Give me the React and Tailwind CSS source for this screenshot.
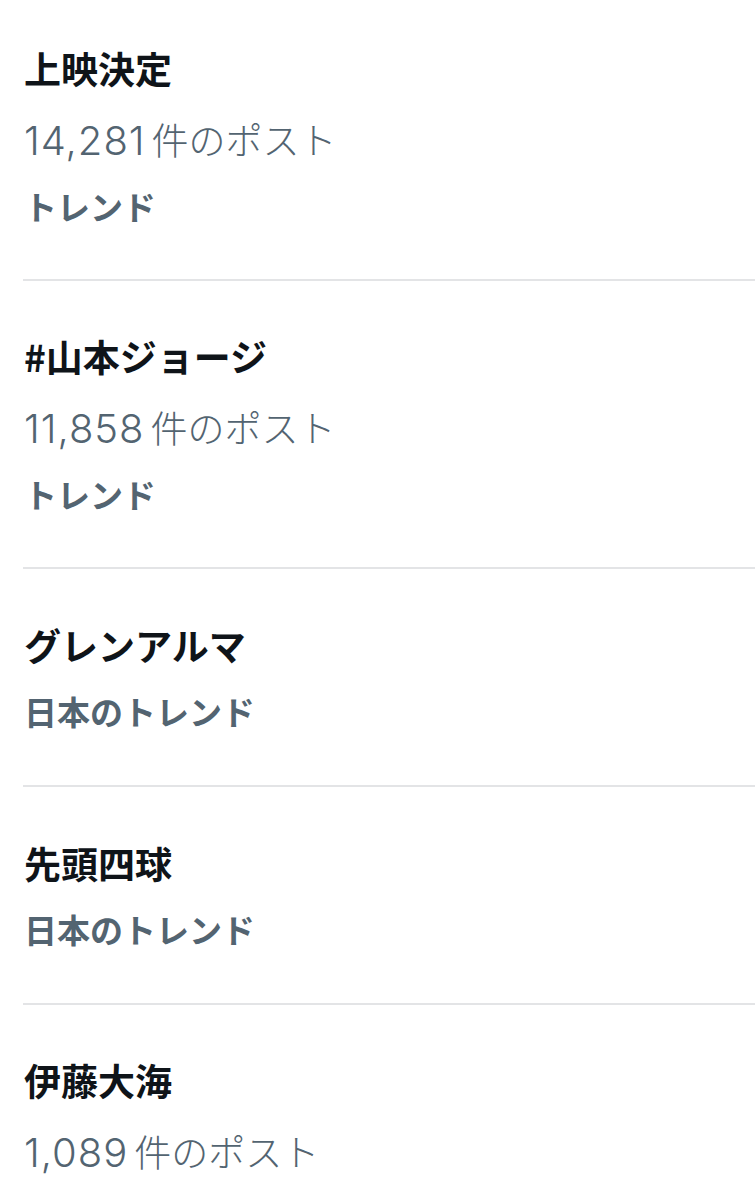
import React from "react";

const items = [
  { title: "上映決定", count: "14,281", trend: "トレンド" },
  { title: "#山本ジョージ", count: "11,858", trend: "トレンド" },
  { title: "グレンアルマ", trend: "日本のトレンド" },
  { title: "先頭四球", trend: "日本のトレンド" },
  { title: "伊藤大海", count: "1,089" },
];

export default function App() {
  return (
    <div
      className="w-[755px] h-[1200px] overflow-hidden bg-white"
      style={{ fontFamily: '"Noto Sans CJK JP", "Noto Sans", sans-serif' }}
    >
      {items.map((it, i) => {
        const pad =
          i === 0
            ? "pt-[34px] pb-[39px]"
            : it.count
            ? "pt-[41px] pb-[39px]"
            : "pt-[42px] pb-[40px]";
        return (
          <div key={i}>
            {i > 0 && <div className="ml-[23px] h-[2px] bg-[#e3e4e6]" />}
            <div className={"pl-[24px] flex flex-col " + pad}>
              <div className="h-[68px] leading-[68px] text-[37px] font-bold text-[#0f1419]">
                {it.title}
              </div>
              {it.count && (
                <div className="mt-[3px] h-[68px] leading-[68px] text-[37px] font-light text-[#536471] whitespace-nowrap">
                  <span className="font-[Inter,sans-serif] text-[40px] tracking-[1px]">
                    {it.count}
                  </span>
                  <span className="ml-[6px]">件のポスト</span>
                </div>
              )}
              {it.trend && (
                <div
                  className={
                    "h-[68px] leading-[68px] text-[33px] font-bold text-[#536471] " +
                    (it.count ? "mt-[-1px]" : "mt-[-2px]")
                  }
                >
                  {it.trend}
                </div>
              )}
            </div>
          </div>
        );
      })}
    </div>
  );
}
